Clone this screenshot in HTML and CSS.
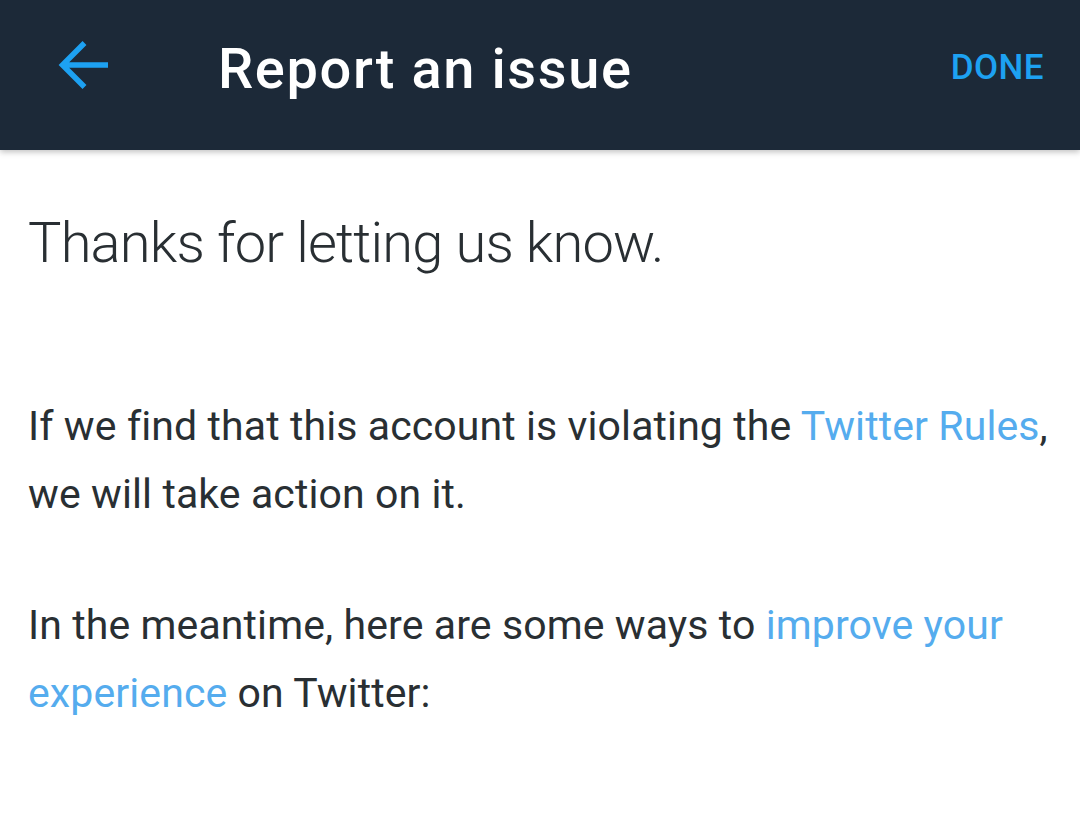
FILE: index.html
```html
<!DOCTYPE html>
<html lang="en">
<head>
  <meta charset="UTF-8" />
  <meta name="viewport" content="width=device-width, initial-scale=1.0"/>
  <title>Report an issue</title>
  <link rel="stylesheet" href="styles.css">
</head>
<body>
  <header class="toolbar">
    <button class="back-btn" aria-label="Back">
      <svg width="56" height="56" viewBox="0 0 56 56">
        <path d="M54 24H9M30.5 2L8.5 24 30.5 46" fill="none" stroke="#1da1f2" stroke-width="5.5"/>
      </svg>
    </button>
    <h1 class="toolbar-title">Report an issue</h1>
    <a class="done-btn" href="#">DONE</a>
  </header>

  <main class="content">
    <h2 class="thanks">Thanks for letting us know.</h2>

    <p class="body-text">
      If we find that this account is violating the <a href="#">Twitter Rules</a>,
      we will take action on it.
    </p>

    <p class="body-text">
      In the meantime, here are some ways to <a href="#">improve your experience</a> on Twitter:
    </p>
  </main>
</body>
</html>
```

FILE: styles.css
```css
body {
  margin: 0;
  padding: 0;
  background: #fff;
  font-family: Roboto, "Noto Sans", Arial, sans-serif;
  color: #292f33;
}
.toolbar {
  height: 150px;
  background: #1c2938;
  display: flex;
  align-items: center;
  box-shadow: 0 2px 6px rgba(0, 0, 0, 0.25);
  position: relative;
}
.back-btn {
  background: none;
  border: none;
  padding: 0;
  margin: 41px 0 0 54px;
  width: 56px;
  height: 56px;
  display: flex;
  cursor: pointer;
  align-self: flex-start;
}
.toolbar-title {
  margin: 0 0 12px 108px;
  color: #fff;
  font-size: 56px;
  font-weight: 500;
  letter-spacing: 1.6px;
  flex: 1;
}
.done-btn {
  color: #1da1f2;
  font-size: 35px;
  font-weight: 500;
  letter-spacing: 0.4px;
  text-decoration: none;
  margin: 0 36px 16px 0;
}
.content {
  padding: 59px 28px 0;
}
.thanks {
  margin: 0;
  font-size: 56px;
  font-weight: 300;
  letter-spacing: -0.8px;
  line-height: 68px;
}
.body-text {
  margin: 115px 0 0;
  font-size: 41px;
  letter-spacing: 0.1px;
  line-height: 68px;
}
.body-text + .body-text {
  margin-top: 63px;
}
.body-text a {
  color: #55acee;
  text-decoration: none;
}
```
